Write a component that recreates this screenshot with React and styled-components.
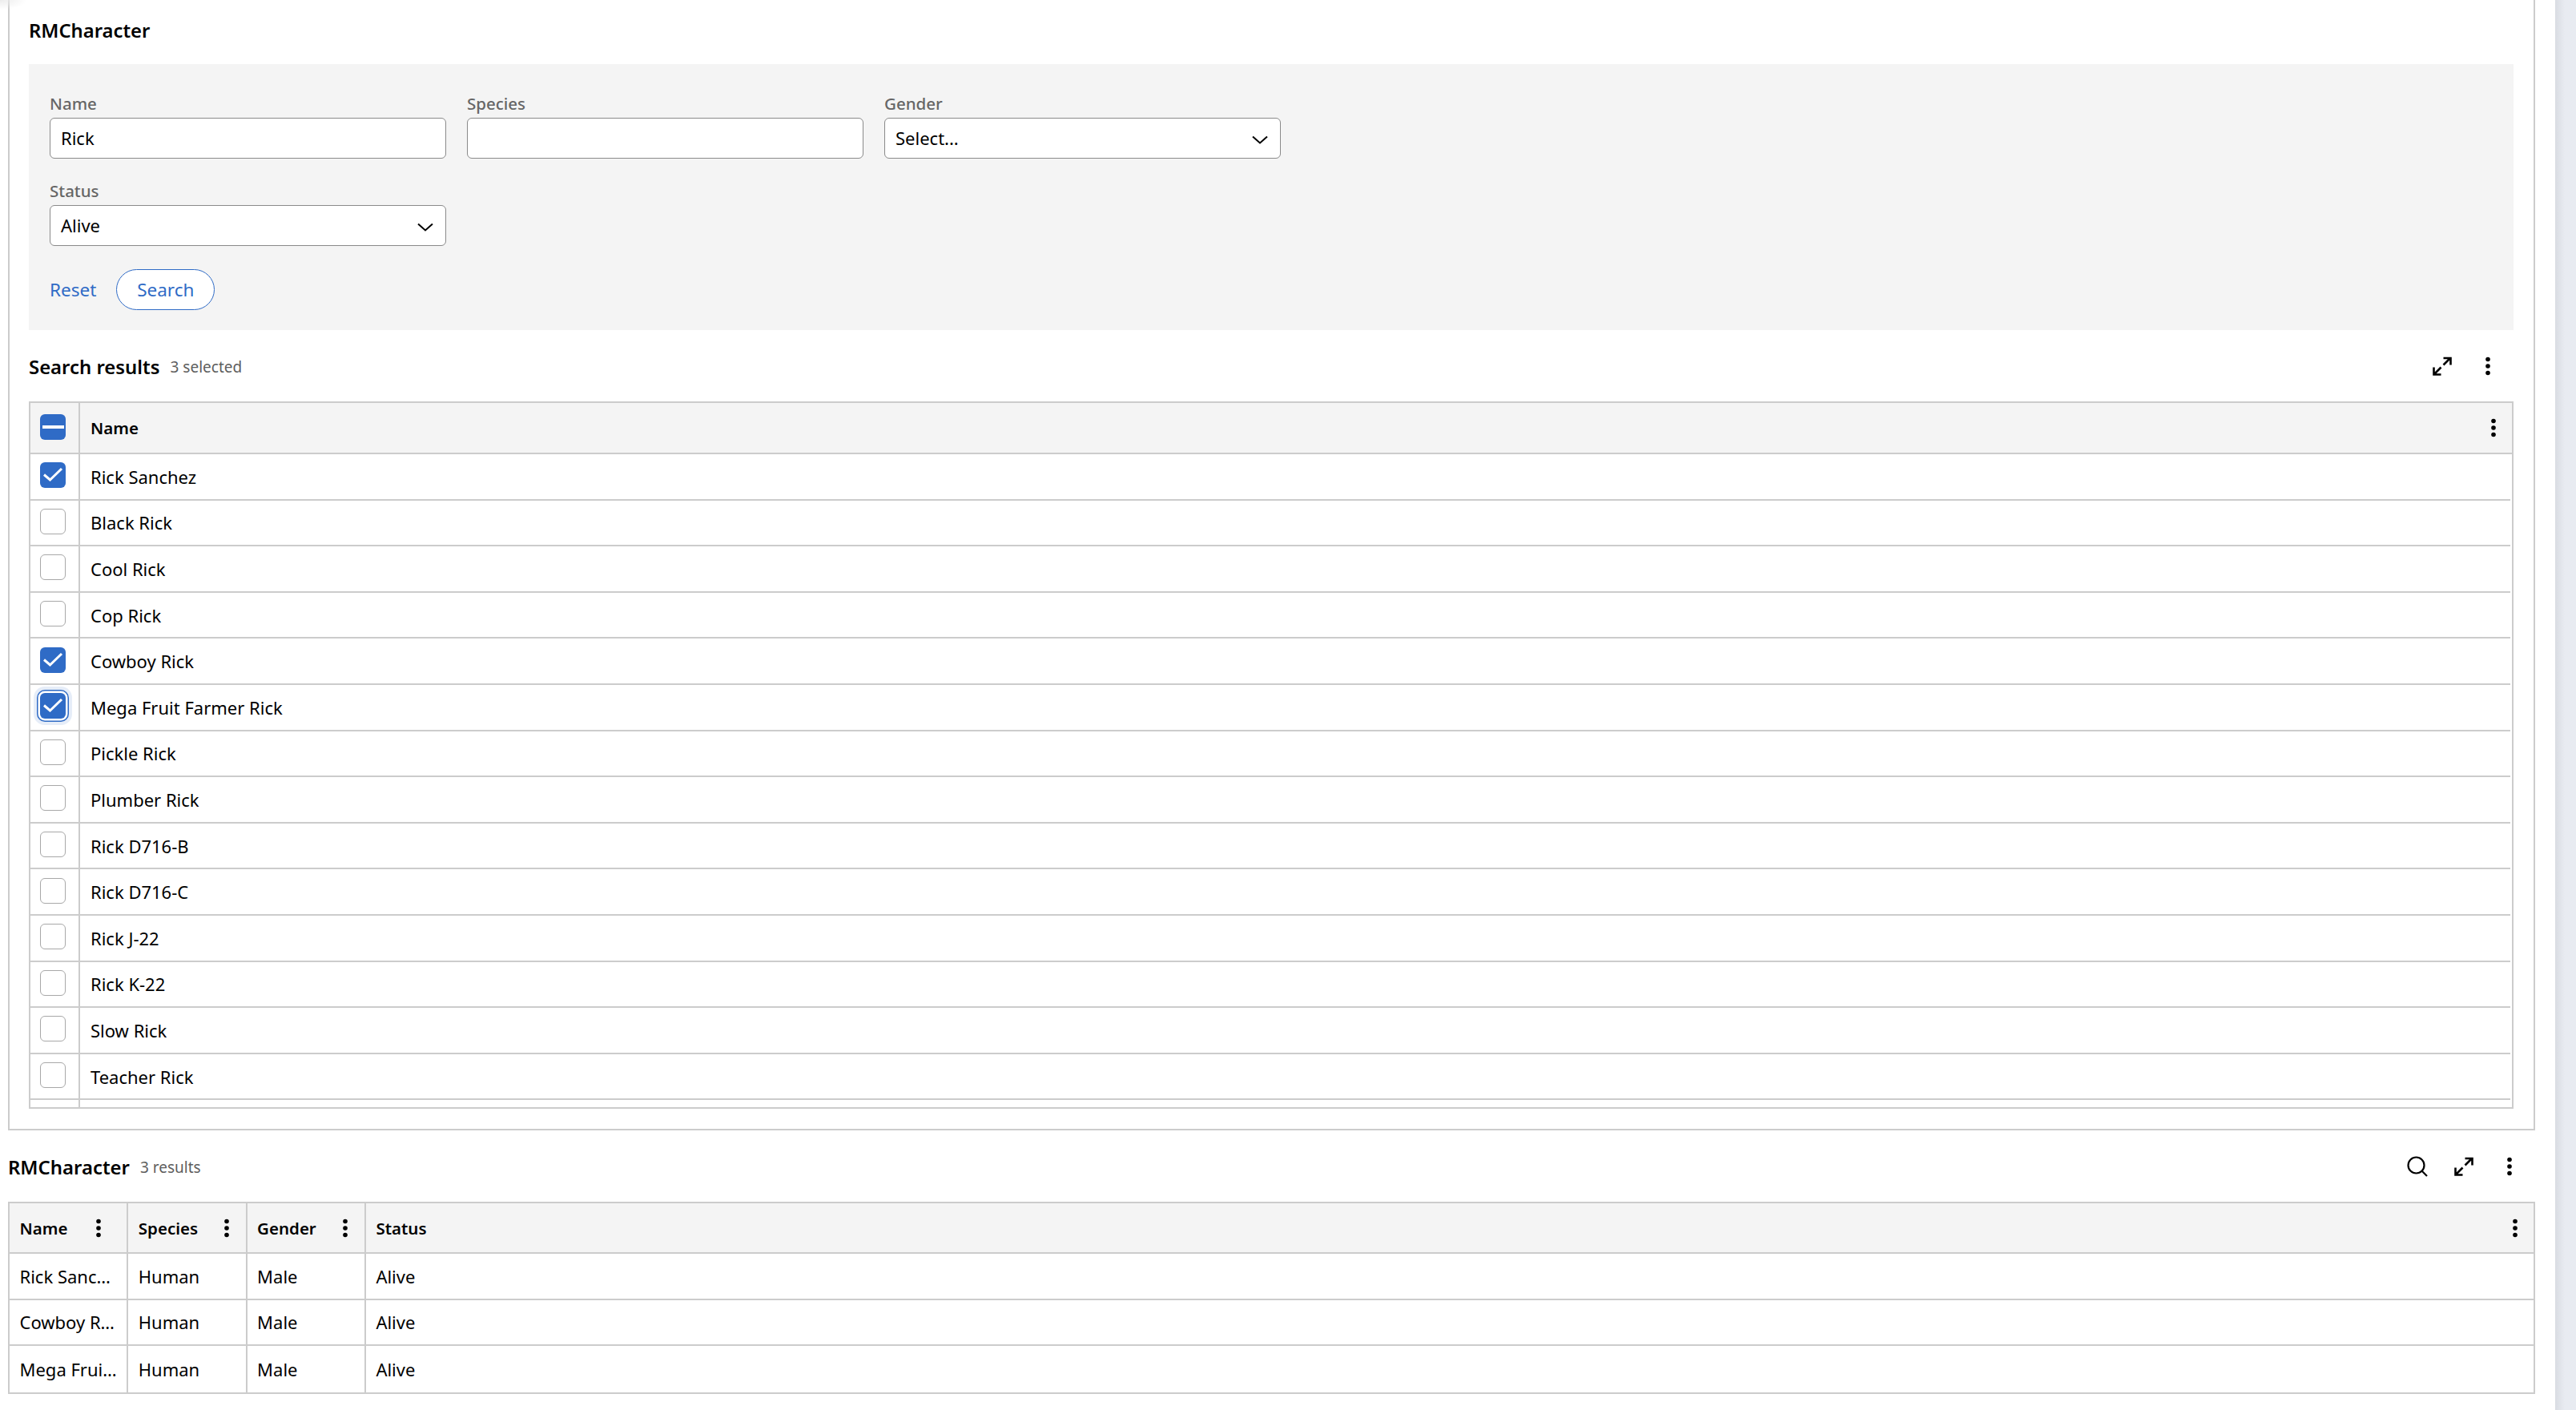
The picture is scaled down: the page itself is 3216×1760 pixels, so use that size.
import React from "react";
import styled, { createGlobalStyle } from "styled-components";

const GlobalStyle = createGlobalStyle`
  html, body { margin: 0; padding: 0; background: #fff; }
  body {
    width: 3216px;
    height: 1760px;
    overflow: hidden;
    font-family: "Noto Sans", "Open Sans", sans-serif;
    color: #000;
  }
`;

const Page = styled.div`
  position: relative;
  display: flex;
  width: 3216px;
  height: 1760px;
  background: #fff;
`;

const CornerShade = styled.div`
  position: absolute;
  left: 0;
  top: 0;
  width: 34px;
  height: 12px;
  background: radial-gradient(ellipse at 0 0, #ececec 0, #ffffff00 70%);
`;

const Main = styled.div`
  width: 3165px;
  padding-left: 10px;
  box-sizing: border-box;
`;

const Gutter = styled.div`
  width: 25px;
  flex: none;
`;

const SideBar = styled.div`
  flex: 1;
  background: linear-gradient(90deg, #d9dce2 0, #e8ebf1 12px);
`;

const TopCard = styled.section`
  height: 1411px;
  box-sizing: border-box;
  border: 2px solid #cccccc;
  border-top: 0;
  padding: 0 25px 0 24px;
`;

const PageTitle = styled.h2`
  margin: 0;
  height: 80px;
  line-height: 76px;
  font-size: 23.8px;
  font-weight: 600;
`;

const FilterPanel = styled.div`
  height: 332px;
  box-sizing: border-box;
  background: #f4f4f4;
  padding: 37px 26px 0;
`;

const FieldGrid = styled.div`
  display: grid;
  grid-template-columns: repeat(3, 495px);
  column-gap: 26px;
  row-gap: 28px;
`;

const Field = styled.div`
  display: flex;
  flex-direction: column;
`;

const FieldLabel = styled.label`
  height: 30px;
  line-height: 25px;
  font-size: 20.5px;
  font-weight: 500;
  color: #666666;
`;

const InputBox = styled.div`
  display: flex;
  align-items: center;
  justify-content: space-between;
  height: 51px;
  box-sizing: border-box;
  padding: 0 15px 2px 13px;
  background: #fff;
  border: 1.5px solid #8a8a8a;
  border-radius: 6px;
  font-size: 22px;
`;

const Actions = styled.div`
  display: flex;
  align-items: center;
  gap: 25px;
  margin-top: 29px;
`;

const LinkButton = styled.button`
  border: 0;
  padding: 0;
  background: none;
  font: inherit;
  font-size: 22.5px;
  color: #2f6bc6;
`;

const OutlineButton = styled.button`
  width: 123px;
  height: 51px;
  padding: 0;
  background: #fff;
  border: 1.5px solid #2f6bc6;
  border-radius: 26px;
  font: inherit;
  font-size: 22.5px;
  color: #2f6bc6;
`;

const SectionBar = styled.div`
  display: flex;
  align-items: center;
  height: 89px;
`;

const SectionHeading = styled.div`
  display: flex;
  align-items: center;
  padding-top: 2px;
`;

const SectionTitle = styled.span`
  font-size: 23.9px;
  font-weight: 600;
`;

const SectionCount = styled.span`
  margin-left: 13px;
  font-size: 19px;
  color: #5e5e5e;
`;

const SectionTools = styled.div`
  display: flex;
  align-items: center;
  margin-left: auto;
  padding-right: 3px;
`;

const ToolButton = styled.span`
  display: flex;
  align-items: center;
  justify-content: center;
  width: 57.5px;
  flex: none;
`;

const ToolIcon = styled.svg`
  display: block;
  flex: none;
`;

const ChevronIcon = styled(ToolIcon)`
  margin-top: 6px;
`;

const Table = styled.div`
  border: 2px solid #cccccc;
  box-sizing: border-box;
  overflow: hidden;
  ${(p) => p.$height && `height: ${p.$height}px;`}
`;

const Row = styled.div`
  display: flex;
  box-sizing: border-box;
  height: ${(p) => p.$height}px;
  border-bottom: ${(p) => (p.$last ? 0 : "2px solid #cccccc")};
  background: ${(p) => (p.$head ? "#f4f4f4" : "#fff")};
  font-weight: ${(p) => (p.$head ? 600 : 400)};
  font-size: ${(p) => (p.$head ? "20.5px" : "22px")};
  ${(p) => p.$inset && "margin-right: 2px;"}
`;

const CheckCell = styled.div`
  display: flex;
  align-items: center;
  justify-content: center;
  width: 62px;
  flex: none;
  box-sizing: border-box;
  border-right: 2px solid #cccccc;
  padding: 0 4px 3px 0;
`;

const NameCell = styled.div`
  flex: 1;
  display: flex;
  align-items: center;
  justify-content: space-between;
  padding: 0 20px 0 13px;
  min-width: 0;
`;

const Cell = styled.div`
  display: flex;
  align-items: center;
  justify-content: space-between;
  box-sizing: border-box;
  flex: ${(p) => (p.$grow ? "1" : "none")};
  width: ${(p) => (p.$grow ? "auto" : "148.3px")};
  padding: 0 ${(p) => p.$pad ?? 4}px 0 12.5px;
  border-right: ${(p) => (p.$grow ? 0 : "2px solid #cccccc")};
  min-width: 0;
  white-space: nowrap;
`;

const Box = styled.span`
  display: inline-flex;
  align-items: center;
  justify-content: center;
  width: 32px;
  height: 32px;
  box-sizing: border-box;
  border-radius: 6px;
  background: ${(p) => (p.$on ? "#2f6bc6" : "#fff")};
  border: ${(p) => (p.$on ? 0 : "1.5px solid #a8a8a8")};
  ${(p) =>
    p.$focus &&
    `box-shadow: 0 0 0 2.5px #fff, 0 0 0 4px #2f6bc6, 0 0 0 8px #e6edf8;`}
`;

const Chevron = () => (
  <ChevronIcon width="20" height="11" viewBox="0 0 20 11" fill="none">
    <path d="M1 1.5 L10 9.5 L19 1.5" stroke="#000" strokeWidth="2" />
  </ChevronIcon>
);

const Dots = () => (
  <ToolIcon width="6" height="24" viewBox="0 0 6 24" fill="#000">
    <circle cx="3" cy="3.5" r="2.8" />
    <circle cx="3" cy="12" r="2.8" />
    <circle cx="3" cy="20.5" r="2.8" />
  </ToolIcon>
);

const Expand = () => (
  <ToolIcon width="24" height="24" viewBox="0 0 24 24" fill="none" stroke="#000" strokeWidth="2.6">
    <path d="M13.5 10.5 L22 2 M13.5 2 H22.5 V10.5" />
    <path d="M10.5 13.5 L2 22 M1.5 13.5 V22.5 H10.5" />
  </ToolIcon>
);

const Magnifier = () => (
  <ToolIcon width="26" height="26" viewBox="0 0 26 26" fill="none" stroke="#000" strokeWidth="2.2">
    <circle cx="11.5" cy="11.5" r="10" />
    <path d="M18.5 18.5 L25 25" />
  </ToolIcon>
);

const CheckBox = ({ on, partial, focus }) => (
  <Box $on={on || partial} $focus={focus}>
    {on && (
      <svg width="32" height="32" viewBox="0 0 32 32" fill="none">
        <path d="M5 15.5 L12.5 22 L27 8" stroke="#fff" strokeWidth="3" />
      </svg>
    )}
    {partial && (
      <svg width="32" height="32" viewBox="0 0 32 32">
        <rect x="3" y="14" width="27" height="4" fill="#fff" />
      </svg>
    )}
  </Box>
);

const searchRows = [
  { name: "Rick Sanchez", on: true },
  { name: "Black Rick" },
  { name: "Cool Rick" },
  { name: "Cop Rick" },
  { name: "Cowboy Rick", on: true },
  { name: "Mega Fruit Farmer Rick", on: true, focus: true },
  { name: "Pickle Rick" },
  { name: "Plumber Rick" },
  { name: "Rick D716-B" },
  { name: "Rick D716-C" },
  { name: "Rick J-22" },
  { name: "Rick K-22" },
  { name: "Slow Rick" },
  { name: "Teacher Rick" },
  { name: "" },
];

const resultRows = ["Rick Sanc…", "Cowboy R…", "Mega Frui…"];

export default function App() {
  return (
    <Page>
      <GlobalStyle />
      <CornerShade />
      <Main>
        <TopCard>
          <PageTitle>RMCharacter</PageTitle>
          <FilterPanel>
            <FieldGrid>
              <Field>
                <FieldLabel>Name</FieldLabel>
                <InputBox>Rick</InputBox>
              </Field>
              <Field>
                <FieldLabel>Species</FieldLabel>
                <InputBox />
              </Field>
              <Field>
                <FieldLabel>Gender</FieldLabel>
                <InputBox>
                  Select...
                  <Chevron />
                </InputBox>
              </Field>
              <Field>
                <FieldLabel>Status</FieldLabel>
                <InputBox>
                  Alive
                  <Chevron />
                </InputBox>
              </Field>
            </FieldGrid>
            <Actions>
              <LinkButton>Reset</LinkButton>
              <OutlineButton>Search</OutlineButton>
            </Actions>
          </FilterPanel>
          <SectionBar>
            <SectionHeading>
              <SectionTitle>Search results</SectionTitle>
              <SectionCount>3 selected</SectionCount>
            </SectionHeading>
            <SectionTools>
              <ToolButton><Expand /></ToolButton>
              <ToolButton><Dots /></ToolButton>
            </SectionTools>
          </SectionBar>
          <Table $height={883}>
            <Row $head $height={64}>
              <CheckCell>
                <CheckBox partial />
              </CheckCell>
              <NameCell>
                Name
                <Dots />
              </NameCell>
            </Row>
            {searchRows.map((r, i) => (
              <Row key={i} $height={57.6} $inset>
                <CheckCell>
                  {r.name && <CheckBox on={r.on} focus={r.focus} />}
                </CheckCell>
                <NameCell>{r.name}</NameCell>
              </Row>
            ))}
          </Table>
        </TopCard>
        <SectionBar>
          <SectionHeading>
            <SectionTitle>RMCharacter</SectionTitle>
            <SectionCount>3 results</SectionCount>
          </SectionHeading>
          <SectionTools>
            <ToolButton><Magnifier /></ToolButton>
            <ToolButton><Expand /></ToolButton>
            <ToolButton><Dots /></ToolButton>
          </SectionTools>
        </SectionBar>
        <Table>
          <Row $head $height={63}>
            <Cell $pad={32}>
              Name
              <Dots />
            </Cell>
            <Cell $pad={21}>
              Species
              <Dots />
            </Cell>
            <Cell $pad={21}>
              Gender
              <Dots />
            </Cell>
            <Cell $pad={20} $grow>
              Status
              <Dots />
            </Cell>
          </Row>
          {resultRows.map((name, i) => (
            <Row key={name} $height={57.5} $last={i === resultRows.length - 1}>
              <Cell>{name}</Cell>
              <Cell>Human</Cell>
              <Cell>Male</Cell>
              <Cell $grow>Alive</Cell>
            </Row>
          ))}
        </Table>
      </Main>
      <Gutter />
      <SideBar />
    </Page>
  );
}
